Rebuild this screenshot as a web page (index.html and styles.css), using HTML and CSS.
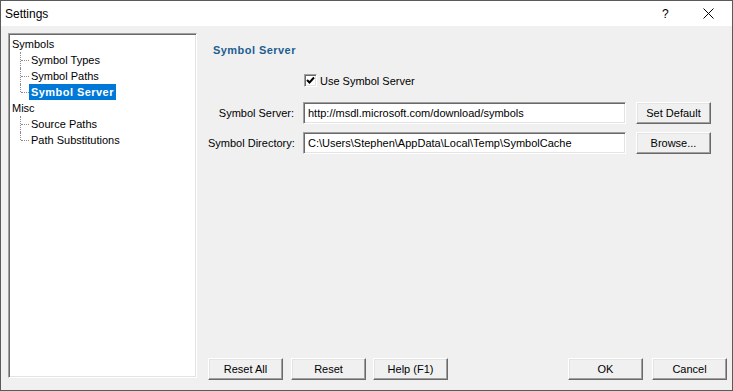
FILE: index.html
```html
<!DOCTYPE html>
<html lang="en">
<head>
  <meta charset="UTF-8" />
  <title>Settings</title>
  <link rel="stylesheet" href="styles.css">
</head>
<body>
  <div class="window">
    <div class="titlebar">
      <span class="title">Settings</span>
      <span class="help">?</span>
      <svg class="close" width="11" height="11" viewBox="0 0 11 11">
        <path d="M0.5 0.5 L10.5 10.5 M10.5 0.5 L0.5 10.5" stroke="#000" stroke-width="1" fill="none" />
      </svg>
    </div>

    <div class="content">
      <div class="tree">
        <ul class="tree-root">
          <li>
            <span class="node">Symbols</span>
            <ul class="children">
              <li><span class="node">Symbol Types</span></li>
              <li><span class="node">Symbol Paths</span></li>
              <li><span class="node selected">Symbol Server</span></li>
            </ul>
          </li>
          <li>
            <span class="node">Misc</span>
            <ul class="children">
              <li><span class="node">Source Paths</span></li>
              <li><span class="node">Path Substitutions</span></li>
            </ul>
          </li>
        </ul>
      </div>

      <div class="page">
        <h3 class="page-title">Symbol Server</h3>

        <div class="form">
          <label class="check">
            <span class="check-box">
              <svg width="9" height="9" viewBox="0 0 9 9">
                <path d="M1 4 L3.5 6.5 L8 1.5" stroke="#000" stroke-width="2" fill="none" />
              </svg>
            </span>
            Use Symbol Server
          </label>

          <label class="field-label">Symbol Server:</label>
          <input class="field" type="text" value="http://msdl.microsoft.com/download/symbols" />
          <button class="btn">Set Default</button>

          <label class="field-label">Symbol Directory:</label>
          <input class="field" type="text" value="C:\Users\Stephen\AppData\Local\Temp\SymbolCache" />
          <button class="btn">Browse...</button>
        </div>

        <div class="footer">
          <button class="btn">Reset All</button>
          <button class="btn">Reset</button>
          <button class="btn help-btn">Help (F1)</button>
          <button class="btn ok-btn">OK</button>
          <button class="btn cancel-btn">Cancel</button>
        </div>
      </div>
    </div>
  </div>
</body>
</html>
```

FILE: styles.css
```css
html, body {
  margin: 0;
  padding: 0;
}

body {
  font-family: 'Liberation Sans', Arial, sans-serif;
  font-size: 11px;
  color: #000;
  background: #f0f0f0;
}

.window {
  width: 733px;
  height: 391px;
  box-sizing: border-box;
  border: 1px solid #5a5a5a;
  display: flex;
  flex-direction: column;
  background: #f0f0f0;
}

/* title bar */
.titlebar {
  height: 25px;
  background: #fff;
  display: flex;
  align-items: center;
  padding-left: 4px;
  flex-shrink: 0;
}

.title {
  font-size: 12px;
  flex: 1;
}

.help {
  font-size: 12px;
  width: 10px;
  margin-right: 31px;
}

.close {
  margin-right: 18px;
}

/* main area */
.content {
  flex: 1;
  display: flex;
  padding: 7px 5px 0 7px;
}

.tree {
  width: 189px;
  height: 345px;
  box-sizing: border-box;
  background: #fff;
  border-style: solid;
  border-width: 1px;
  border-color: #a0a0a0 #fff #fff #a0a0a0;
  box-shadow: inset 1px 1px 0 #696969, inset -1px -1px 0 #e3e3e3;
  padding: 2px 0 0 2px;
  flex-shrink: 0;
}

.tree ul {
  list-style: none;
  margin: 0;
  padding: 0;
}

.tree-root {
  padding-left: 1px;
}

.tree li {
  line-height: 16px;
}

.node {
  display: inline-block;
  padding: 0 1px;
  height: 16px;
  white-space: nowrap;
}

.children {
  padding-left: 18px !important;
}

.children li {
  position: relative;
}

.children .node {
  padding: 0 2px;
}

.children li::before {
  content: "";
  position: absolute;
  left: -9px;
  top: 0;
  height: 16px;
  border-left: 1px dotted #8c8c8c;
}

.children li:last-child::before {
  height: 8px;
}

.children li::after {
  content: "";
  position: absolute;
  left: -8px;
  top: 8px;
  width: 8px;
  border-top: 1px dotted #8c8c8c;
}

.node.selected {
  background: #0078d7;
  color: #fff;
  font-weight: bold;
  letter-spacing: 0.45px;
}

/* settings page */
.page {
  flex: 1;
  display: flex;
  flex-direction: column;
  margin-left: 11px;
  padding-bottom: 10px;
}

.page-title {
  margin: 10px 0 0 5px;
  font-size: 11px;
  line-height: 14px;
  font-weight: bold;
  letter-spacing: 0.45px;
  color: #1c5e91;
}

.form {
  margin-top: 17px;
  display: grid;
  grid-template-columns: 87px 323px 77px;
  column-gap: 8px;
  row-gap: 8px;
  align-items: center;
}

.check {
  grid-column: 2 / 4;
  display: flex;
  align-items: center;
  height: 13px;
  margin: 0 0 7px 1px;
}

.check-box {
  width: 13px;
  height: 13px;
  box-sizing: border-box;
  background: #fff;
  border-style: solid;
  border-width: 1px;
  border-color: #a0a0a0 #fff #fff #a0a0a0;
  box-shadow: inset 1px 1px 0 #696969, inset -1px -1px 0 #e3e3e3;
  display: flex;
  align-items: center;
  justify-content: center;
  margin-right: 3px;
}

.field-label {
  text-align: right;
  padding-right: 1px;
  white-space: nowrap;
}

.field {
  height: 22px;
  box-sizing: border-box;
  font-family: inherit;
  font-size: 11px;
  padding: 0 0 0 4px;
  margin: 0;
  background: #fff;
  border-style: solid;
  border-width: 1px;
  border-color: #a0a0a0 #fff #fff #a0a0a0;
  box-shadow: inset 1px 1px 0 #696969, inset -1px -1px 0 #e3e3e3;
  outline: none;
}

.btn {
  width: 75px;
  height: 22px;
  box-sizing: border-box;
  font-family: inherit;
  font-size: 11px;
  color: #000;
  padding: 0;
  margin: 0;
  background: #f0f0f0;
  border-style: solid;
  border-width: 1px;
  border-color: #fff #696969 #696969 #fff;
  box-shadow: inset -1px -1px 0 #a0a0a0, inset 1px 1px 0 #e3e3e3;
  justify-self: end;
}

.footer {
  margin-top: auto;
  display: flex;
  gap: 8px;
}

.help-btn {
  margin-left: -1px;
}

.ok-btn {
  margin-left: auto;
}

.cancel-btn {
  margin-left: 1px;
}
```
